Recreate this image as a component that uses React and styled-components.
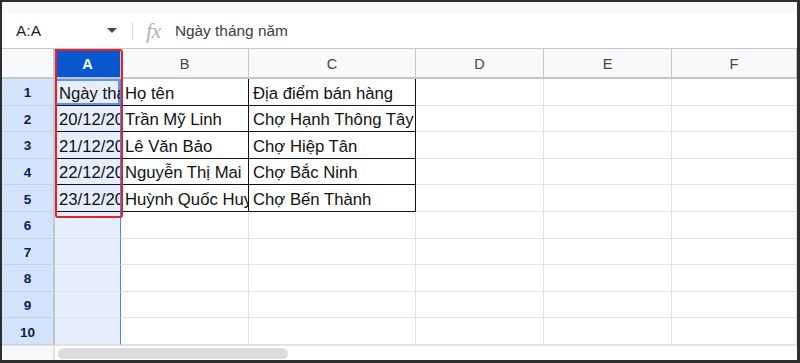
import React from "react";
import styled, { createGlobalStyle } from "styled-components";

const GlobalStyle = createGlobalStyle`
  body {
    margin: 0;
    font-family: "Liberation Sans", Arial, sans-serif;
    background: #ffffff;
  }
`;

const Frame = styled.div`
  width: 800px;
  height: 363px;
  box-sizing: border-box;
  border-style: solid;
  border-color: #2e2e2e;
  border-width: 2px 3px 3px 2px;
  display: flex;
  flex-direction: column;
  background: #ffffff;
  overflow: hidden;
`;

const TopStrip = styled.div`
  height: 11px;
  background: #f8f9fa;
`;

const FormulaBar = styled.div`
  height: 36px;
  box-sizing: border-box;
  border-bottom: 1px solid #c7c7c7;
  display: flex;
  align-items: center;
`;

const NameBox = styled.div`
  width: 118px;
  box-sizing: border-box;
  padding-left: 14px;
  padding-right: 3px;
  display: flex;
  align-items: center;
  justify-content: space-between;
  font-size: 15.5px;
  color: #1f1f1f;
`;

const Caret = styled.span`
  width: 0;
  height: 0;
  border-left: 5px solid transparent;
  border-right: 5px solid transparent;
  border-top: 5px solid #444746;
`;

const Divider = styled.div`
  width: 1px;
  height: 18px;
  background: #d5d7da;
  margin-left: 12px;
`;

const Fx = styled.span`
  font-family: "Liberation Serif", "Times New Roman", serif;
  font-style: italic;
  font-size: 22px;
  color: #b3b3b3;
  margin-left: 13px;
  letter-spacing: -0.5px;
`;

const FormulaText = styled.span`
  margin-left: 14px;
  font-size: 15.4px;
  color: #3c4043;
`;

const Sheet = styled.div`
  position: relative;
  display: grid;
  grid-template-columns: 53px 66px 128px 167px 128px 128px 1fr;
  grid-template-rows: 30px repeat(10, 26.6px);
`;

const Corner = styled.div`
  background: #f8f9fa;
  border-right: 2px solid #c7c7c7;
  border-bottom: 2px solid #c7c7c7;
  box-sizing: border-box;
`;

const ColHeader = styled.div`
  box-sizing: border-box;
  display: flex;
  align-items: center;
  justify-content: center;
  padding-top: 1px;
  font-size: 14.5px;
  font-weight: ${(p) => (p.$selected ? 700 : 400)};
  color: ${(p) => (p.$selected ? "#ffffff" : "#444746")};
  background: ${(p) => (p.$selected ? "#0b57d0" : "#f8f9fa")};
  border-right: 1px solid #c7c7c7;
  border-bottom: 2px solid #c7c7c7;
`;

const RowHeader = styled.div`
  box-sizing: border-box;
  display: flex;
  align-items: center;
  justify-content: center;
  padding-top: 2px;
  font-size: 13.5px;
  font-weight: 700;
  color: #0a1f4e;
  background: #d3e3fd;
  border-right: 2px solid #c7c7c7;
  border-bottom: 1px solid #c7cfe0;
`;

const Cell = styled.div`
  box-sizing: border-box;
  display: flex;
  align-items: flex-end;
  padding: 0 0 1px 4px;
  font-size: 16.7px;
  color: #111111;
  white-space: nowrap;
  overflow: hidden;
  background: ${(p) => (p.$inSelection ? "#e6eefd" : "#ffffff")};
  border-right: 1px solid ${(p) => p.$right || "#e2e2e2"};
  border-bottom: 1px solid ${(p) => p.$bottom || "#e2e2e2"};
  box-shadow: ${(p) => (p.$active ? "inset 0 0 0 2px #5b94f2" : "none")};
`;

const Highlight = styled.div`
  position: absolute;
  left: 53px;
  top: 0;
  width: 68px;
  height: 169px;
  box-sizing: border-box;
  border: 2px solid #e0242b;
  border-radius: 3px;
  pointer-events: none;
`;

const ScrollStrip = styled.div`
  flex: 1;
  display: flex;
  border-top: 1px solid #e2e2e2;
  background: #ffffff;
`;

const ScrollCorner = styled.div`
  width: 53px;
  background: #f8f9fa;
  border-right: 2px solid #e2e2e2;
  box-sizing: border-box;
`;

const ScrollThumb = styled.div`
  width: 230px;
  height: 11px;
  margin: 2px 0 0 3px;
  border-radius: 6px;
  background: #dadce0;
`;

const columns = ["A", "B", "C", "D", "E", "F"];

const data = [
  ["Ngày tháng năm", "Họ tên", "Địa điểm bán hàng"],
  ["20/12/2023", "Trần Mỹ Linh", "Chợ Hạnh Thông Tây"],
  ["21/12/2023", "Lê Văn Bảo", "Chợ Hiệp Tân"],
  ["22/12/2023", "Nguyễn Thị Mai", "Chợ Bắc Ninh"],
  ["23/12/2023", "Huỳnh Quốc Huy", "Chợ Bến Thành"],
];

const App = () => {
  const rows = Array.from({ length: 10 }, (_, i) => i);

  return (
    <Frame>
      <GlobalStyle />
      <TopStrip />
      <FormulaBar>
        <NameBox>
          A:A <Caret />
        </NameBox>
        <Divider />
        <Fx>fx</Fx>
        <FormulaText>Ngày tháng năm</FormulaText>
      </FormulaBar>

      <Sheet>
        <Corner />
        {columns.map((col) => (
          <ColHeader key={col} $selected={col === "A"}>
            {col}
          </ColHeader>
        ))}

        {rows.map((r) => (
          <React.Fragment key={r}>
            <RowHeader>{r + 1}</RowHeader>
            {columns.map((col, c) => {
              const boxed = r < 5 && c < 3;
              let right;
              if (c === 0) right = "#4a86e8";
              else if (boxed) right = "#111111";
              return (
                <Cell
                  key={col}
                  $inSelection={c === 0}
                  $active={r === 0 && c === 0}
                  $right={right}
                  $bottom={boxed ? "#111111" : undefined}
                >
                  {boxed ? data[r][c] : ""}
                </Cell>
              );
            })}
          </React.Fragment>
        ))}

        <Highlight />
      </Sheet>

      <ScrollStrip>
        <ScrollCorner />
        <ScrollThumb />
      </ScrollStrip>
    </Frame>
  );
};

export default App;
